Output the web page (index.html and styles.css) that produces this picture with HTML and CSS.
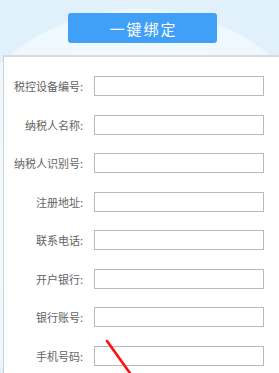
FILE: index.html
```html
<!DOCTYPE html>
<html lang="zh-CN">
<head>
  <meta charset="UTF-8">
  <meta name="viewport" content="width=device-width, initial-scale=1.0">
  <title>一键绑定</title>
  <link rel="stylesheet" href="styles.css">
</head>
<body>

  <div class="header">
    <button class="bind-button">一键绑定</button>
  </div>

  <div class="panel">
    <div class="row"><label>税控设备编号:</label><input type="text"></div>
    <div class="row"><label>纳税人名称:</label><input type="text"></div>
    <div class="row"><label>纳税人识别号:</label><input type="text"></div>
    <div class="row"><label>注册地址:</label><input type="text"></div>
    <div class="row"><label>联系电话:</label><input type="text"></div>
    <div class="row"><label>开户银行:</label><input type="text"></div>
    <div class="row"><label>银行账号:</label><input type="text"></div>
    <div class="row"><label>手机号码:</label><input type="text"></div>
  </div>

  <svg class="mark" width="279" height="373" viewBox="0 0 279 373">
    <line x1="107" y1="341" x2="132" y2="376" stroke="#ff1010" stroke-width="2.6" stroke-linecap="round"/>
  </svg>

</body>
</html>
```

FILE: styles.css
```css
body {
  font-family: "Noto Sans CJK SC", "Microsoft YaHei", sans-serif;
  margin: 0;
  padding: 0;
  height: 100vh;
  overflow: hidden;
  position: relative;
  display: flex;
  flex-direction: column;
  background: radial-gradient(circle at 140px 215px, #f4fbff 0, #eef8fe 205px, #e1f1fb 207px, #e1f1fb 100%);
}
.header {
  height: 55px;
  flex-shrink: 0;
  box-sizing: border-box;
  padding-top: 13px;
}
.bind-button {
  display: block;
  margin-left: 68px;
  width: 149px;
  height: 30px;
  border: none;
  border-radius: 3px;
  background-color: #409ff6;
  color: #fff;
  font-family: inherit;
  font-size: 15px;
  letter-spacing: 2px;
  padding: 0 0 0 2px;
  cursor: pointer;
}
.panel {
  flex: 1;
  min-height: 0;
  margin-left: 3px;
  background-color: #fff;
  border-top: 2px solid #dadada;
  border-left: 1px solid #cfcfcf;
  padding-top: 19px;
  display: flex;
  flex-direction: column;
  gap: 18.5px;
}
.row {
  display: flex;
  align-items: center;
  height: 20px;
  flex-shrink: 0;
}
.row label {
  width: 79px;
  text-align: right;
  font-size: 11px;
  color: #636363;
  margin-right: 11px;
  white-space: nowrap;
}
.row input {
  width: 170px;
  height: 20px;
  box-sizing: border-box;
  border: 1px solid #b9b9b9;
  margin: 0;
  padding: 0 4px;
}
.mark {
  position: absolute;
  left: 0;
  top: 0;
  pointer-events: none;
}
```
